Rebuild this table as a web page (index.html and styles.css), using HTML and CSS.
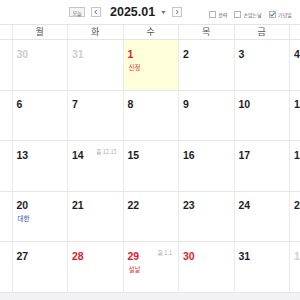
FILE: index.html
```html
<!DOCTYPE html>
<html lang="ko">
<head>
<meta charset="utf-8">
<link rel="stylesheet" href="styles.css">
</head>
<body>
<div class="toolbar">
  <span class="btn-today">오늘</span>
  <span class="btn-arrow prev"><svg viewBox="0 0 10 10" width="8" height="8"><path d="M6 2.5 L3.5 5 L6 7.5" fill="none" stroke="#444" stroke-width="1"/></svg></span>
  <span class="title">2025.01</span>
  <span class="caret"><svg viewBox="0 0 6 4" width="5" height="3"><path d="M0 0 H6 L3 4 Z" fill="#777"/></svg></span>
  <span class="btn-arrow next"><svg viewBox="0 0 10 10" width="8" height="8"><path d="M4 2.5 L6.5 5 L4 7.5" fill="none" stroke="#444" stroke-width="1"/></svg></span>
  <span class="opts">
    <span class="opt"><span class="box"></span><span class="lbl">음력</span></span>
    <span class="opt"><span class="box"></span><span class="lbl">손없는날</span></span>
    <span class="opt"><span class="box checked"><svg viewBox="0 0 8 8" width="7" height="7"><path d="M1.5 4 L3.3 5.8 L6.6 2" fill="none" stroke="#2a6bd1" stroke-width="1.2"/></svg></span><span class="lbl">기념일</span></span>
  </span>
</div>
<div class="cal">
  <div class="weekdays">
    <div class="wd">일</div><div class="wd">월</div><div class="wd">화</div><div class="wd">수</div><div class="wd">목</div><div class="wd">금</div><div class="wd">토</div>
  </div>
  <div class="grid">
    <div class="cell"><span class="num other">29</span></div>
    <div class="cell"><span class="num other">30</span></div>
    <div class="cell"><span class="num other">31</span></div>
    <div class="cell today"><span class="num red">1</span><div class="hol red-l">신정</div></div>
    <div class="cell"><span class="num">2</span></div>
    <div class="cell"><span class="num">3</span></div>
    <div class="cell"><span class="num">4</span></div>

    <div class="cell"><span class="num red">5</span></div>
    <div class="cell"><span class="num">6</span></div>
    <div class="cell"><span class="num">7</span></div>
    <div class="cell"><span class="num">8</span></div>
    <div class="cell"><span class="num">9</span></div>
    <div class="cell"><span class="num">10</span></div>
    <div class="cell"><span class="num">11</span></div>

    <div class="cell"><span class="num red">12</span></div>
    <div class="cell"><span class="num">13</span></div>
    <div class="cell"><span class="num">14</span><span class="lunar">음 12.15</span></div>
    <div class="cell"><span class="num">15</span></div>
    <div class="cell"><span class="num">16</span></div>
    <div class="cell"><span class="num">17</span></div>
    <div class="cell"><span class="num">18</span></div>

    <div class="cell"><span class="num red">19</span></div>
    <div class="cell"><span class="num">20</span><div class="hol blue">대한</div></div>
    <div class="cell"><span class="num">21</span></div>
    <div class="cell"><span class="num">22</span></div>
    <div class="cell"><span class="num">23</span></div>
    <div class="cell"><span class="num">24</span></div>
    <div class="cell"><span class="num">25</span></div>

    <div class="cell"><span class="num red">26</span></div>
    <div class="cell"><span class="num">27</span></div>
    <div class="cell"><span class="num red">28</span></div>
    <div class="cell"><span class="num red">29</span><span class="lunar">음 1.1</span><div class="hol red-l">설날</div></div>
    <div class="cell"><span class="num red">30</span></div>
    <div class="cell"><span class="num">31</span></div>
    <div class="cell"><span class="num other">1</span></div>
  </div>
</div>
</body>
</html>
```
FILE: styles.css
```css
html, body {
  margin: 0;
  padding: 0;
}
body {
  width: 300px;
  height: 300px;
  overflow: hidden;
  background: #f2f2f4;
  font-family: "Liberation Sans", "Noto Sans CJK KR", sans-serif;
  color: #222;
}
.toolbar {
  display: flex;
  align-items: center;
  height: 24px;
  padding-left: 69px;
  background: #fff;
  border-bottom: 1px solid #e3e3e3;
  white-space: nowrap;
  overflow: hidden;
}
.btn-today {
  display: flex;
  align-items: center;
  justify-content: center;
  width: 16px;
  height: 10px;
  box-sizing: border-box;
  border: 1px solid #c6c6c6;
  background: #f4f4f4;
  font-family: "Noto Sans CJK KR", sans-serif;
  font-size: 5px;
  color: #555;
}
.btn-arrow {
  display: flex;
  align-items: center;
  justify-content: center;
  width: 10px;
  height: 10px;
  box-sizing: border-box;
  border: 1px solid #c6c6c6;
  background: #fafafa;
}
.prev { margin-left: 6px; }
.title {
  margin-left: 9px;
  font-size: 12.5px;
  font-weight: bold;
  color: #1e1e1e;
  line-height: 14px;
}
.caret {
  display: flex;
  margin-left: 6px;
}
.next { margin-left: 6px; }
.opts {
  display: flex;
  align-items: center;
  margin-left: 27px;
  margin-top: 5px;
}
.opt {
  display: flex;
  align-items: center;
  margin-right: 7px;
}
.box {
  display: flex;
  align-items: center;
  justify-content: center;
  width: 7px;
  height: 7px;
  box-sizing: border-box;
  border: 1px solid #b4b4b4;
  background: #fff;
}
.box svg { flex: none; }
.lbl {
  margin-left: 2px;
  font-family: "Noto Sans CJK KR", sans-serif;
  font-size: 5px;
  color: #666;
}
.cal {
  margin-left: -44px;
  width: 388.5px;
  background: #fff;
}
.weekdays {
  display: grid;
  grid-template-columns: repeat(7, 55.5px);
  height: 15px;
  border-bottom: 1px solid #e3e3e3;
  box-sizing: border-box;
  height: 15px;
}
.wd {
  border-left: 1px solid #e8e8e8;
  text-align: center;
  font-family: "Noto Sans CJK KR", sans-serif;
  font-size: 9px;
  line-height: 14px;
  color: #555;
}
.grid {
  display: grid;
  grid-template-columns: repeat(7, 55.5px);
  grid-auto-rows: 50.5px;
}
.cell {
  box-sizing: border-box;
  border-left: 1px solid #ebebeb;
  border-bottom: 1px solid #e6e6e6;
  padding: 3.5px 6px 0 4px;
  overflow: hidden;
}
.cell.today {
  background: #fefedb;
}
.num {
  font-size: 10.5px;
  line-height: 13px;
  font-weight: bold;
  color: #1e1e1e;
}
.num.other { color: #cfcfcf; }
.num.red { color: #e51c28; }
.lunar {
  float: right;
  font-family: "Noto Sans CJK KR", sans-serif;
  font-size: 5.5px;
  line-height: 13px;
  color: #aaa;
  margin-top: 1px;
}
.hol {
  margin-top: 1px;
  margin-left: 1px;
  font-family: "Noto Sans CJK KR", sans-serif;
  font-size: 6.5px;
  line-height: 9px;
}
.red-l { color: #e2383c; }
.blue { color: #2f55a8; }
```
